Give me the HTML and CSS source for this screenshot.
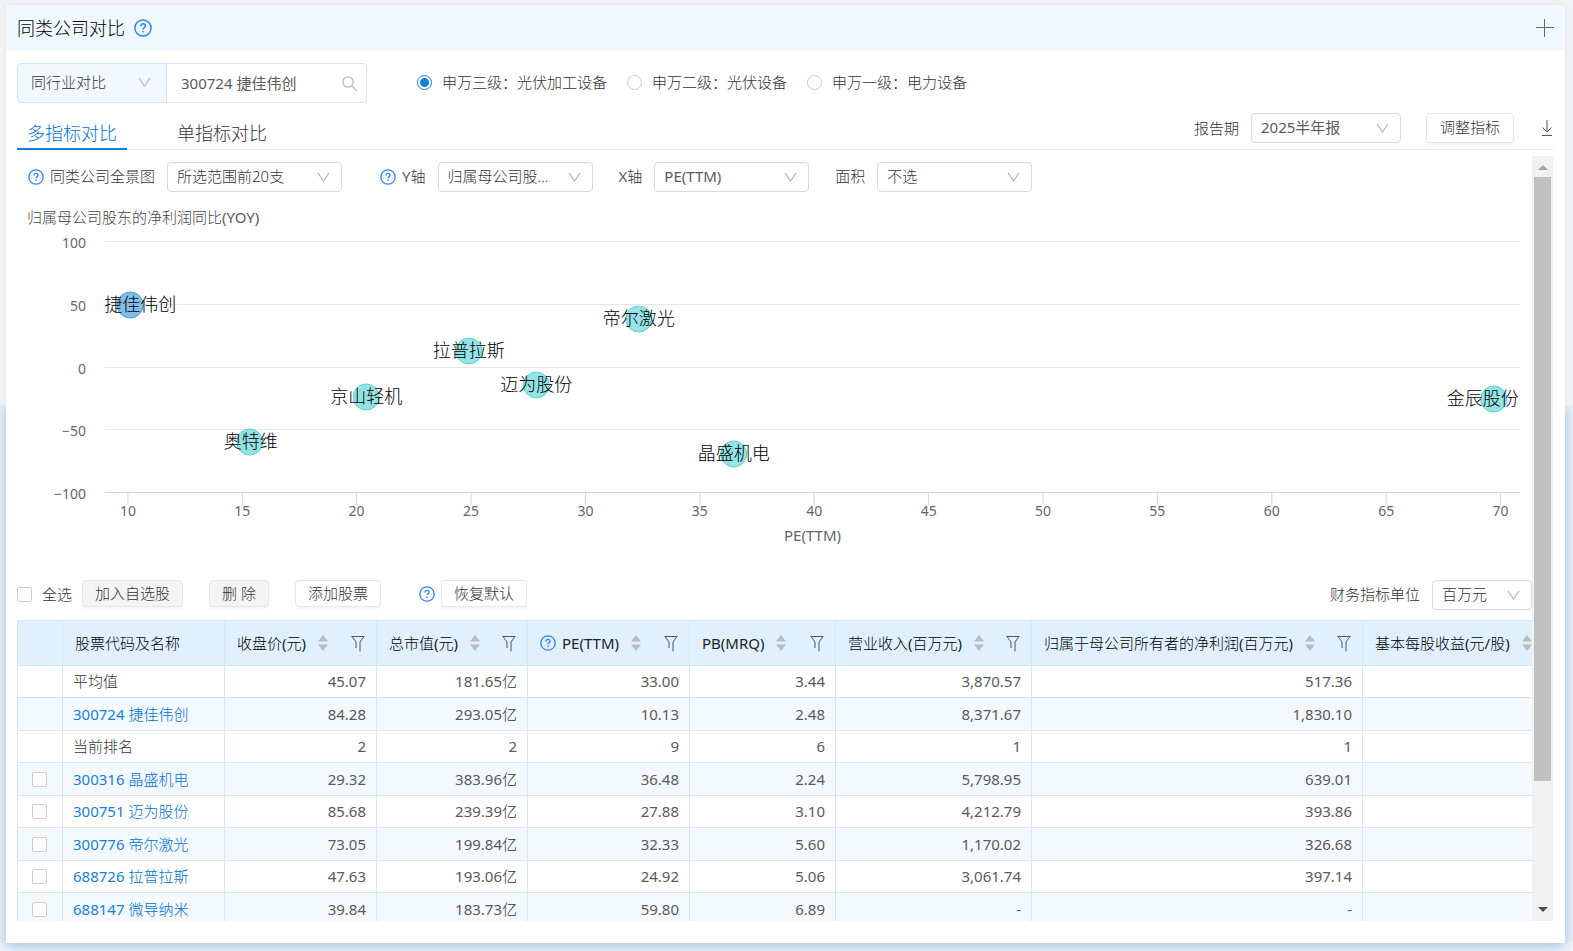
FILE: index.html
```html
<!DOCTYPE html>
<html lang="zh-CN">
<head>
<meta charset="utf-8">
<title>同类公司对比</title>
<link rel="stylesheet" href="styles.css">
</head>
<body>
<svg class="defs" aria-hidden="true">
  <symbol id="i-help" viewBox="0 0 16 16"><circle cx="8" cy="8" r="7.2"/><path d="M5.9 6.4c0-1.3.9-2.1 2.1-2.1s2.1.8 2.1 1.9c0 1.4-2.1 1.5-2.1 3.1M8 10.6v1.3"/></symbol>
  <symbol id="i-chev" viewBox="0 0 14 12"><path d="M1 1l6 9 6-9"/></symbol>
  <symbol id="i-sort" viewBox="0 0 10 18"><path d="M5 1l5 6.500H0zM5 17l5-6.500H0z"/></symbol>
  <symbol id="i-filter" viewBox="0 0 14 17"><path d="M.5 1.500h13M1 1.500l4 5.500v6M13 1.500L9 7v9.500"/></symbol>
</svg>
<main class="card">
  <header class="card-head">
    <h1>同类公司对比</h1>
    <svg class="help help-lg"><use href="#i-help"/></svg>
    <button class="icon-btn push" aria-label="添加"><svg class="plus" viewBox="0 0 18 18"><path d="M0 8.500h18M8.500 0v18"/></svg></button>
  </header>

  <form class="scope">
    <div class="combo">
      <span class="select select-scope"><select aria-label="对比范围"><option>同行业对比</option></select><svg><use href="#i-chev"/></svg></span>
      <label class="search"><input class="lat" type="text" aria-label="股票" value="300724 捷佳伟创"><svg viewBox="0 0 15 15"><circle cx="6" cy="6" r="5.200"/><path d="M9.800 9.800L14.500 14.500"/></svg></label>
    </div>
    <div class="radios">
      <label><input type="radio" name="lv" checked>申万三级：光伏加工设备</label>
      <label><input type="radio" name="lv">申万二级：光伏设备</label>
      <label><input type="radio" name="lv">申万一级：电力设备</label>
    </div>
  </form>

  <div class="tabbar">
    <nav class="tabs">
      <button class="tab active">多指标对比</button>
      <button class="tab">单指标对比</button>
    </nav>
    <div class="tools">
      <label for="period">报告期</label>
      <span class="select select-period"><select class="lat" id="period"><option>2025半年报</option></select><svg><use href="#i-chev"/></svg></span>
      <button class="btn btn-adjust">调整指标</button>
      <button class="icon-btn" aria-label="下载"><svg class="download" viewBox="0 0 12 16"><path d="M6 0v12M1.500 7.500L6 12l4.500-4.500M1 15.500h10"/></svg></button>
    </div>
  </div>

  <div class="pane">
    <div class="content">
      <div class="axes">
        <div class="field">
          <svg class="help"><use href="#i-help"/></svg>
          <label for="range">同类公司全景图</label>
          <span class="select select-range"><select id="range"><option>所选范围前20支</option></select><svg><use href="#i-chev"/></svg></span>
        </div>
        <div class="field field-y">
          <svg class="help"><use href="#i-help"/></svg>
          <label for="yaxis"><span class="lat">Y</span>轴</label>
          <span class="select"><select id="yaxis"><option>归属母公司股...</option></select><svg><use href="#i-chev"/></svg></span>
        </div>
        <div class="field">
          <label for="xaxis"><span class="lat">X</span>轴</label>
          <span class="select"><select class="lat" id="xaxis"><option>PE(TTM)</option></select><svg><use href="#i-chev"/></svg></span>
        </div>
        <div class="field">
          <label for="area">面积</label>
          <span class="select"><select id="area"><option>不选</option></select><svg><use href="#i-chev"/></svg></span>
        </div>
      </div>

      <section class="chart">
        <h2>归属母公司股东的净利润同比<span class="lat">(YOY)</span></h2>
        <svg class="plot" id="plot" role="img" aria-label="归属母公司股东的净利润同比与PE(TTM)散点图"></svg>
      </section>

      <div class="actions">
        <label class="all"><input type="checkbox">全选</label>
        <button class="btn btn-muted">加入自选股</button>
        <button class="btn btn-muted gap">删 除</button>
        <button class="btn gap">添加股票</button>
        <svg class="help gap-lg"><use href="#i-help"/></svg>
        <button class="btn btn-reset">恢复默认</button>
        <label class="push" for="unit">财务指标单位</label>
        <span class="select select-unit"><select id="unit"><option>百万元</option></select><svg><use href="#i-chev"/></svg></span>
      </div>

      <div class="table-clip">
        <table>
          <colgroup><col class="c-check"><col class="c-name"><col class="c-price"><col class="c-cap"><col class="c-pe"><col class="c-pb"><col class="c-rev"><col class="c-net"><col class="c-eps"></colgroup>
          <thead><tr id="head"></tr></thead>
          <tbody id="body"></tbody>
        </table>
      </div>
    </div>
    <div class="scrollbar" aria-hidden="true">
      <span class="arrow up"></span><span class="thumb"></span><span class="arrow down"></span>
    </div>
  </div>
</main>
<script src="app.js"></script>
</body>
</html>
```
FILE: app.js
```js
const pct = v => (v * 100).toFixed(2) + '%';
const xPos = v => (v - 9) / 61.85;
const yPos = v => 23 + (100 - v) * 1.255;
// Latin runs are set in the regular weight, Chinese in the light one.
const latin = s => s.replace(/[\x20-\x7e]+/g, '<span class="lat">$&</span>');

let plot = '';
[100, 50, 0, -50, -100].forEach(v => {
  const y = Math.round(yPos(v)) - 0.5;
  plot += `<line class="${v === -100 ? 'axis' : 'grid'}" x1="0" x2="100%" y1="${y}" y2="${y}"/>`;
  plot += `<text class="tick-label end" x="-19" y="${y + 6}">${v < 0 ? '−' + -v : v}</text>`;
});
for (let v = 10; v <= 70; v += 5) {
  const x = pct(xPos(v));
  plot += `<line class="axis" x1="${x}" x2="${x}" y1="274" y2="286"/>`;
  plot += `<text class="tick-label" x="${x}" y="297">${v}</text>`;
}
plot += '<text class="axis-title" x="50%" y="322">PE(TTM)</text>';
const points = [
  ['捷佳伟创', 10.1, 49.5, 10], ['奥特维', 15.33, -59.5, 1], ['京山轻机', 20.42, -23.5, 0],
  ['拉普拉斯', 24.9, 13.5, 0], ['迈为股份', 27.85, -14, 0], ['帝尔激光', 32.33, 38.500, 0],
  ['晶盛机电', 36.48, -69, 0], ['金辰股份', 69.7, -25, -11]
];
points.forEach(([, x, y], i) => {
  plot += `<circle class="${i ? 'peer' : 'self'}" cx="${pct(xPos(x))}" cy="${Math.round(yPos(y))}" r="13"/>`;
});
points.forEach(([name, x, y, dx]) => {
  plot += `<text class="name" x="${pct(xPos(x))}" y="${Math.round(yPos(y)) + 6}" dx="${dx}">${name}</text>`;
});
document.getElementById('plot').innerHTML = plot;

const heads = ['收盘价(元)', '总市值(元)', 'PE(TTM)', 'PB(MRQ)', '营业收入(百万元)', '归属于母公司所有者的净利润(百万元)', '基本每股收益(元/股)'];
document.getElementById('head').innerHTML = '<th></th><th>股票代码及名称</th>' + heads.map(h =>
  `<th><div class="th">${h === 'PE(TTM)' ? '<svg class="help"><use href="#i-help"/></svg>' : ''}<span>${latin(h)}</span><svg class="sort"><use href="#i-sort"/></svg><svg class="filter"><use href="#i-filter"/></svg></div></th>`).join('');

const rows = [
  ['平均值', '45.07', '181.65亿', '33.00', '3.44', '3,870.57', '517.36'],
  ['300724 捷佳伟创', '84.28', '293.05亿', '10.13', '2.48', '8,371.67', '1,830.10'],
  ['当前排名', '2', '2', '9', '6', '1', '1'],
  ['300316 晶盛机电', '29.32', '383.96亿', '36.48', '2.24', '5,798.95', '639.01'],
  ['300751 迈为股份', '85.68', '239.39亿', '27.88', '3.10', '4,212.79', '393.86'],
  ['300776 帝尔激光', '73.05', '199.84亿', '32.33', '5.60', '1,170.02', '326.68'],
  ['688726 拉普拉斯', '47.63', '193.06亿', '24.92', '5.06', '3,061.74', '397.14'],
  ['688147 微导纳米', '39.84', '183.73亿', '59.80', '6.89', '-', '-']
];
document.getElementById('body').innerHTML = rows.map(([name, ...nums], i) =>
  `<tr><td class="pick">${i > 2 ? `<input type="checkbox" aria-label="${name}">` : ''}</td>` +
  `<td>${/^\d/.test(name) ? `<a href="#">${latin(name)}</a>` : name}</td>` +
  nums.map(n => `<td class="num">${latin(n)}</td>`).join('') + '<td></td></tr>').join('');
```
FILE: styles.css
```css
* { box-sizing: border-box; }
html { height: 100%; }
body {
  margin: 0;
  min-height: 100%;
  padding: 5px 8px 8px 6px;
  display: flex;
  background: linear-gradient(#f2f3f5 0 43%, #e9eff6 43%);
  background-size: 100% 942px;
  font: 300 15px/20px "Noto Sans", "Noto Sans CJK SC", sans-serif;
  color: #333;
}
input, select, button { font: inherit; color: inherit; margin: 0; }
button { cursor: pointer; }
h1, h2 { margin: 0; font-weight: 300; }
.lat { font-weight: 400; color: #5a5a5a; }
.defs { position: absolute; width: 0; height: 0; }
svg { fill: none; flex: none; }
.push { margin-left: auto; }

.card {
  position: relative;
  z-index: 0;
  flex: 1;
  min-width: 0;
  height: 938px;
  display: flex;
  flex-direction: column;
  box-shadow: 0 0 6px #e2e4e8;
}
.card::before {
  content: "";
  position: absolute;
  z-index: -1;
  inset: 400px 0 0;
  box-shadow: 0 3px 12px #a3c3e6;
  clip-path: inset(0 -8px -8px -6px);
}
.card::after {
  content: "";
  position: absolute;
  z-index: -1;
  inset: 0;
  background: #fff;
}
.card-head {
  display: flex;
  align-items: center;
  height: 45px;
  padding: 0 11px;
  background: #f0f8ff;
}
.card-head h1 { font-size: 18px; color: #000; margin-right: 9px; }
.help { width: 16px; height: 16px; stroke: #2f80ed; stroke-width: 1.300; }
.help-lg { width: 18px; height: 18px; }
.icon-btn { border: 0; background: none; padding: 0; display: flex; }
.plus { width: 18px; height: 18px; stroke: #666; }
.download { width: 12px; height: 16px; stroke: #555; }

.scope { display: flex; align-items: center; padding: 13px 11px 0; }
.combo { display: flex; }
.select { position: relative; display: flex; width: 155px; height: 30px; }
.select select {
  appearance: none;
  width: 100%;
  padding: 0 28px 2px 9px;
  border: 1px solid #d9d9d9;
  border-radius: 4px;
  background: #fff;
}
.select svg {
  position: absolute;
  right: 12px;
  top: calc(50% - 5px);
  width: 13px;
  height: 11px;
  stroke: #bbb;
  stroke-width: 1.300;
  pointer-events: none;
}
.select-scope { width: 150px; height: 40px; }
.select-scope select { background: #f3f8ff; border-color: #d5e5f5; border-radius: 4px 0 0 4px; padding-left: 13px; }
.select-scope svg { right: 16px; top: calc(50% - 6px); }
.search {
  display: flex;
  align-items: center;
  width: 200px;
  height: 40px;
  padding: 0 9px 0 14px;
  border: 1px solid #e2e5e8;
  border-left: 0;
  border-radius: 0 4px 4px 0;
}
.search input { flex: 1; min-width: 0; padding: 0; border: 0; outline: 0; background: none; }
.search svg { width: 15px; height: 15px; stroke: #bbb; stroke-width: 1.300; }
.radios { display: flex; gap: 20px; margin-left: 50px; padding-bottom: 2px; }
.radios label { display: flex; align-items: center; gap: 10px; }
input[type=radio] {
  appearance: none;
  width: 15px;
  height: 15px;
  border: 1px solid #ccc;
  border-radius: 50%;
  background: #fff;
}
input[type=radio]:checked {
  border-color: #1680d8;
  background: radial-gradient(circle, #1680d8 4px, #fff 5px);
}

.tabbar {
  display: flex;
  align-items: flex-end;
  justify-content: space-between;
  height: 47px;
  margin: 0 12px 0 11px;
  border-bottom: 1px solid #e5e5e5;
}
.tabs { display: flex; gap: 40px; margin-bottom: -1px; }
.tab {
  height: 34px;
  padding: 2px 10px 0;
  border: 0;
  border-bottom: 2px solid transparent;
  background: none;
  font-size: 18px;
}
.tab.active { color: #0070d0; border-color: #1680d8; }
.tools { display: flex; align-items: center; margin-bottom: 6px; }
.select-period { width: 150px; margin: 0 25px 0 12px; }
.btn {
  height: 27px;
  padding: 0 12px 2px;
  border: 1px solid #e6e6e6;
  border-radius: 4px;
  background: #fff;
  box-shadow: 0 2px 2px #f6f6f6;
  line-height: 20px;
}
.btn-muted { background: #f4f4f4; }
.btn-adjust { height: 30px; padding: 0 13px 2px; margin-right: 27px; }

.pane {
  flex: 1;
  min-height: 0;
  display: flex;
  margin: 6px 12px 22px 11px;
}
.content { flex: 1; min-width: 0; overflow: hidden; }
.axes { display: flex; gap: 26px; padding: 6px 0 0 11px; }
.field { display: flex; align-items: center; }
.field label { padding-bottom: 2px; }
.field .help { margin-right: 6px; }
.field .select { margin-left: 12px; }
.field .select-range { width: 175px; }
.field-y { margin-left: 12px; }

.chart { padding: 15px 12px 0 88px; }
.chart h2 { margin-left: -78px; font-size: 15px; color: #444; }
.plot { display: block; width: 100%; height: 342px; margin-top: -8px; overflow: visible; }
.grid { stroke: #e6e6e6; }
.axis { stroke: #ccd6eb; }
.tick-label { font-size: 14px; font-weight: 400; fill: #666; text-anchor: middle; }
.tick-label.end { text-anchor: end; }
.axis-title { font-weight: 400; fill: #666; text-anchor: middle; }
.name { font-size: 18px; fill: #000; text-anchor: middle; }
.peer { fill: #95e3e5; stroke: #5ad3d6; }
.self { fill: #85bdea; stroke: #469de0; }

.actions { display: flex; align-items: flex-start; height: 40px; margin-top: 19px; }
.actions > label, .all { display: flex; align-items: center; height: 28px; gap: 10px; }
.actions .all { margin-right: 10px; }
.gap { margin-left: 26px; }
.gap-lg { margin: 6px 0 0 38px; }
.btn-reset { margin-left: 6px; }
.select-unit { width: 100px; margin-left: 12px; }
input[type=checkbox] {
  appearance: none;
  width: 15px;
  height: 15px;
  border: 1px solid #ccc;
  border-radius: 2px;
  background: #fff;
}

.table-clip { overflow: hidden; }
table { table-layout: fixed; width: 1580px; border-collapse: collapse; }
.c-check { width: 45px; }
.c-name, .c-pe { width: 162px; }
.c-price { width: 152px; }
.c-cap { width: 151px; }
.c-pb { width: 146px; }
.c-rev { width: 196px; }
.c-net { width: 331px; }
th, td { border: 1px solid #d6e6f5; padding: 0 10px; text-align: left; white-space: nowrap; }
th { height: 45px; padding: 0 11px 0 12px; background: #e0f0ff; font-weight: 300; color: #000; }
th .lat { color: #222; }
td { height: 32px; padding-bottom: 2px; }
tbody tr:nth-child(even) td { height: 33px; padding-bottom: 0; background: #f3f9ff; }
td.num { text-align: right; }
td.pick { padding: 0 1px 0 0; }
.pick input { display: block; margin: 0 auto; }
a { color: #0070d0; text-decoration: none; }
a .lat { color: #1680d8; }
.th { display: flex; align-items: center; }
.th .help { margin-right: 6px; }
.sort { width: 10px; height: 18px; fill: #bbb; margin-left: 12px; }
.filter { width: 14px; height: 17px; stroke: #555; margin-left: auto; }

.scrollbar {
  width: 21px;
  padding: 0 2px;
  display: flex;
  flex-direction: column;
  align-items: center;
  background: #f1f1f1;
}
.arrow { border: 5px solid transparent; border-top-width: 0; border-bottom-width: 0; }
.arrow.up { border-bottom: 5px solid #a3a3a3; margin: 9px 0 7px; }
.arrow.down { border-top: 5px solid #505050; margin: auto 0 9px; }
.thumb { width: 100%; height: 79%; min-height: 0; background: #c1c1c1; }
```
